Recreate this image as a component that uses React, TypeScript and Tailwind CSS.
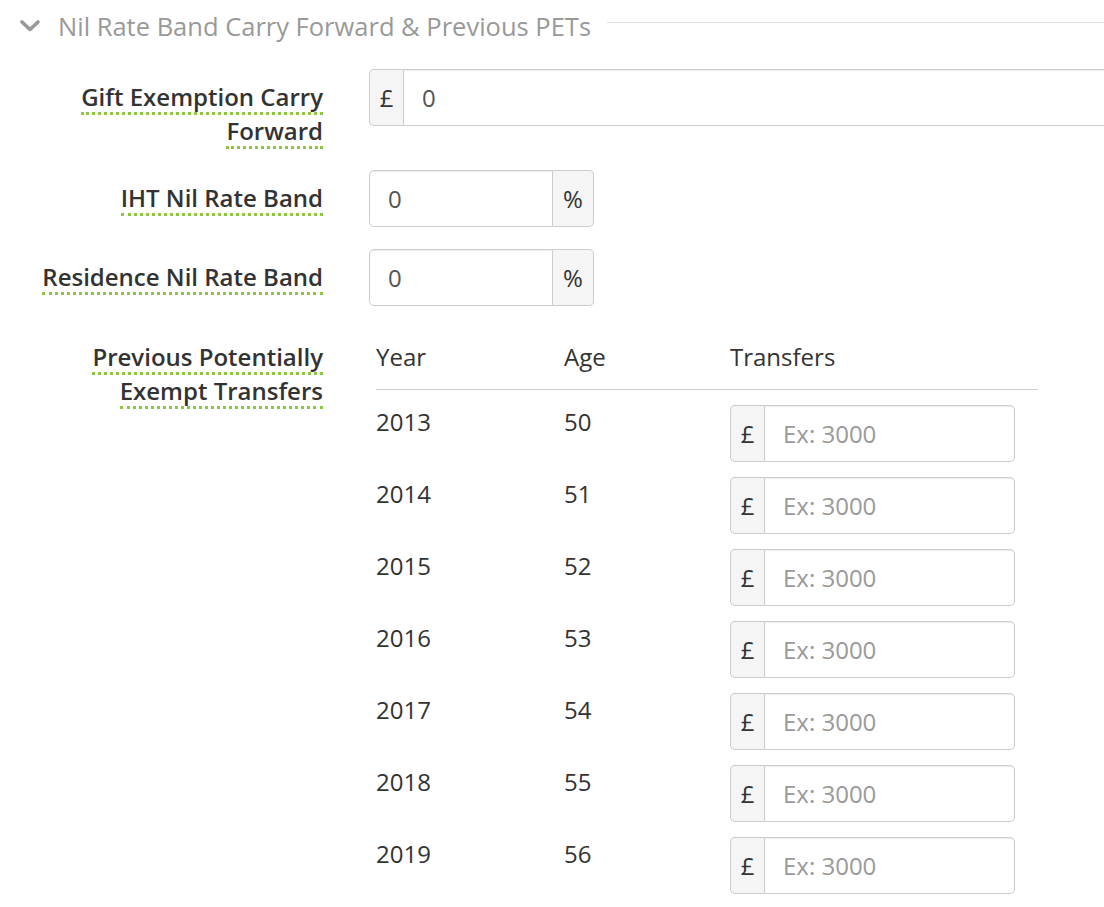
const font = { fontFamily: '"Open Sans", "Noto Sans", sans-serif' };

const Label = ({ lines }: { lines: string[] }) => (
  <div className="w-[323px] shrink-0 flex flex-col items-end pt-[13px]">
    {lines.map((l) => (
      <span
        key={l}
        className="text-[24px] leading-[30px] font-semibold text-[#333] border-b-[3px] border-dotted border-[#8dc63f] mb-[1px] whitespace-nowrap"
      >
        {l}
      </span>
    ))}
  </div>
);

const Addon = ({ children, side }: { children: string; side: "l" | "r" }) => (
  <span
    className={`flex items-center justify-center bg-[#f5f5f5] border border-[#ccc] text-[24px] text-[#333] ${
      side === "l" ? "w-[34px] rounded-l-[5px] border-r-0" : "w-[41px] rounded-r-[5px] border-l-0"
    }`}
  >
    {children}
  </span>
);

const Field = ({ value, placeholder, className }: { value?: string; placeholder?: string; className: string }) => (
  <div
    className={`flex items-center border border-[#ccc] bg-white px-[18px] text-[24px] shadow-[inset_0_1px_1px_rgba(0,0,0,0.075)] ${className}`}
  >
    {value ? <span className="text-[#555]">{value}</span> : <span className="text-[#999]">{placeholder}</span>}
  </div>
);

const years = [2013, 2014, 2015, 2016, 2017, 2018, 2019];

export default function App() {
  return (
    <div className="w-[1104px] h-[907px] overflow-hidden bg-white" style={font}>
      <div className="flex items-center h-[52px]">
        <svg className="ml-[19px]" width="22" height="14" viewBox="0 0 22 14">
          <path d="M3 3 L11 10.5 L19 3" stroke="#999" strokeWidth="3.6" fill="none" strokeLinecap="round" strokeLinejoin="round" />
        </svg>
        <span className="ml-[17px] text-[25.5px] text-[#999] whitespace-nowrap">Nil Rate Band Carry Forward &amp; Previous PETs</span>
        <span className="ml-[16px] flex-1 border-t border-[#ddd] -mt-[7px]" />
      </div>

      <div className="mt-[17px] flex gap-[46px]">
        <Label lines={["Gift Exemption Carry", "Forward"]} />
        <div className="flex h-[57px]">
          <Addon side="l">£</Addon>
          <Field value="0" className="w-[760px] rounded-r-[5px]" />
        </div>
      </div>

      <div className="mt-[20px] flex gap-[46px]">
        <Label lines={["IHT Nil Rate Band"]} />
        <div className="flex h-[57px]">
          <Field value="0" className="w-[184px] rounded-l-[5px]" />
          <Addon side="r">%</Addon>
        </div>
      </div>

      <div className="mt-[22px] flex gap-[46px]">
        <Label lines={["Residence Nil Rate Band"]} />
        <div className="flex h-[57px]">
          <Field value="0" className="w-[184px] rounded-l-[5px]" />
          <Addon side="r">%</Addon>
        </div>
      </div>

      <div className="mt-[22px] flex gap-[46px]">
        <div className="mt-[1px]">
          <Label lines={["Previous Potentially", "Exempt Transfers"]} />
        </div>
        <div className="ml-[7px] w-[662px] text-[24px] text-[#333]">
          <div className="flex h-[62px] border-b border-[#ccc] leading-[30px] pt-[14px]">
            <span className="w-[188px]">Year</span>
            <span className="w-[166px]">Age</span>
            <span>Transfers</span>
          </div>
          {years.map((y, i) => (
            <div key={y} className="flex pt-[15px] leading-[30px]">
              <span className="w-[188px] pt-[2px]">{y}</span>
              <span className="w-[166px] pt-[2px]">{50 + i}</span>
              <div className="flex h-[57px]">
                <Addon side="l">£</Addon>
                <Field placeholder="Ex: 3000" className="w-[251px] rounded-r-[5px]" />
              </div>
            </div>
          ))}
        </div>
      </div>
    </div>
  );
}
